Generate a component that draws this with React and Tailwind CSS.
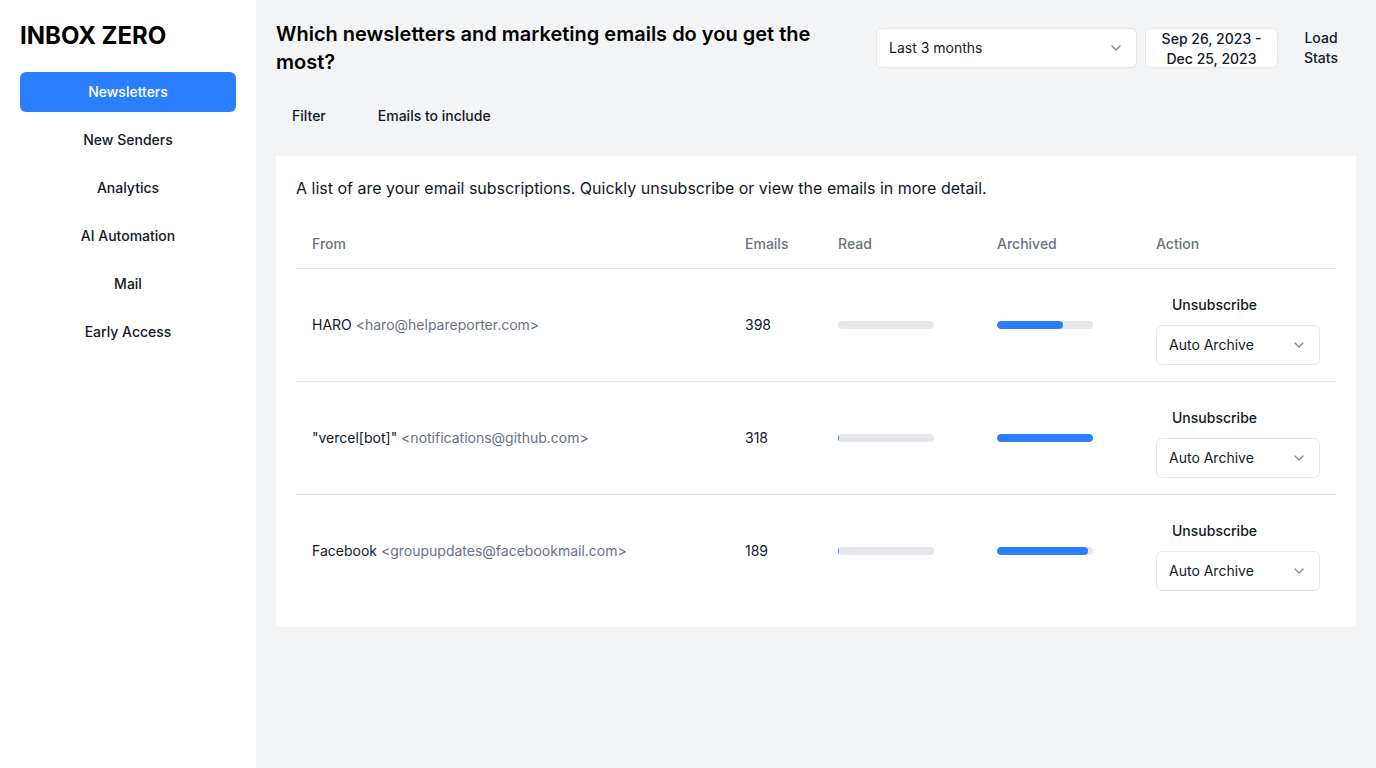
import React from 'react';
import { ChevronDown } from 'lucide-react';

const navItems = ['Newsletters', 'New Senders', 'Analytics', 'AI Automation', 'Mail', 'Early Access'];

const rows = [
    { name: 'HARO', email: '<haro@helpareporter.com>', count: 398, read: 0, archived: 69 },
    { name: '"vercel[bot]"', email: '<notifications@github.com>', count: 318, read: 1, archived: 100 },
    { name: 'Facebook', email: '<groupupdates@facebookmail.com>', count: 189, read: 1, archived: 95 },
];

const Bar = ({ value }) => (
    <div className="w-24 h-2 rounded-full bg-gray-200 overflow-hidden">
        <div className="h-full bg-blue-500 rounded-full" style={{ width: `${value}%` }} />
    </div>
);

const App = () => {
    return (
        <div className="flex min-h-[768px] bg-gray-100 text-gray-900" style={{ fontFamily: 'Inter, "Noto Sans", sans-serif' }}>
            <aside className="w-64 shrink-0 bg-white px-5 pt-5">
                <h1 className="text-2xl font-bold leading-8 text-black">INBOX ZERO</h1>
                <nav className="mt-5 flex flex-col gap-2">
                    {navItems.map((item, i) => (
                        <button
                            key={item}
                            className={`h-10 rounded-md text-sm font-medium ${i === 0 ? 'bg-blue-500 text-white' : 'text-gray-900'}`}
                        >
                            {item}
                        </button>
                    ))}
                </nav>
            </aside>

            <main className="flex-1 px-5 pt-5">
                <div className="flex items-center justify-between">
                    <h2 className="w-[560px] text-xl font-semibold leading-7 text-black">
                        Which newsletters and marketing emails do you get the most?
                    </h2>
                    <div className="flex items-center gap-2">
                        <button className="w-[261px] h-10 px-3 flex items-center justify-between bg-white border border-gray-200 rounded-md text-sm">
                            <span>Last 3 months</span>
                            <ChevronDown className="w-4 h-4 opacity-50" />
                        </button>
                        <button className="w-[133px] h-10 px-3 bg-white border border-gray-200 rounded-md text-sm font-medium leading-5 text-center">
                            Sep 26, 2023 - Dec 25, 2023
                        </button>
                        <button className="w-[70px] px-4 text-sm font-medium leading-5 text-center">
                            Load Stats
                        </button>
                    </div>
                </div>

                <div className="mt-5 flex gap-5">
                    <button className="h-10 px-4 text-sm font-medium">Filter</button>
                    <button className="h-10 px-4 text-sm font-medium">Emails to include</button>
                </div>

                <section className="mt-5 bg-white p-5">
                    <p className="text-base leading-6">
                        A list of are your email subscriptions. Quickly unsubscribe or view the emails in more detail.
                    </p>
                    <table className="mt-5 w-full text-sm">
                        <thead>
                            <tr className="border-b border-gray-200 text-left text-gray-500">
                                <th className="h-12 px-4 font-medium">From</th>
                                <th className="h-12 px-4 font-medium w-[93px]">Emails</th>
                                <th className="h-12 px-4 font-medium w-[159px]">Read</th>
                                <th className="h-12 px-4 font-medium w-[159px]">Archived</th>
                                <th className="h-12 px-4 font-medium w-[196px]">Action</th>
                            </tr>
                        </thead>
                        <tbody>
                            {rows.map((row, i) => (
                                <tr key={row.email} className={i < rows.length - 1 ? 'border-b border-gray-200' : ''}>
                                    <td className="p-4">
                                        {row.name} <span className="text-gray-500">{row.email}</span>
                                    </td>
                                    <td className="p-4">{row.count}</td>
                                    <td className="p-4"><Bar value={row.read} /></td>
                                    <td className="p-4"><Bar value={row.archived} /></td>
                                    <td className="p-4">
                                        <button className="h-10 px-4 font-medium">Unsubscribe</button>
                                        <button className="w-[164px] h-10 px-3 flex items-center justify-between border border-gray-200 rounded-md">
                                            <span>Auto Archive</span>
                                            <ChevronDown className="w-4 h-4 opacity-50" />
                                        </button>
                                    </td>
                                </tr>
                            ))}
                        </tbody>
                    </table>
                </section>
            </main>
        </div>
    );
};

export default App;
